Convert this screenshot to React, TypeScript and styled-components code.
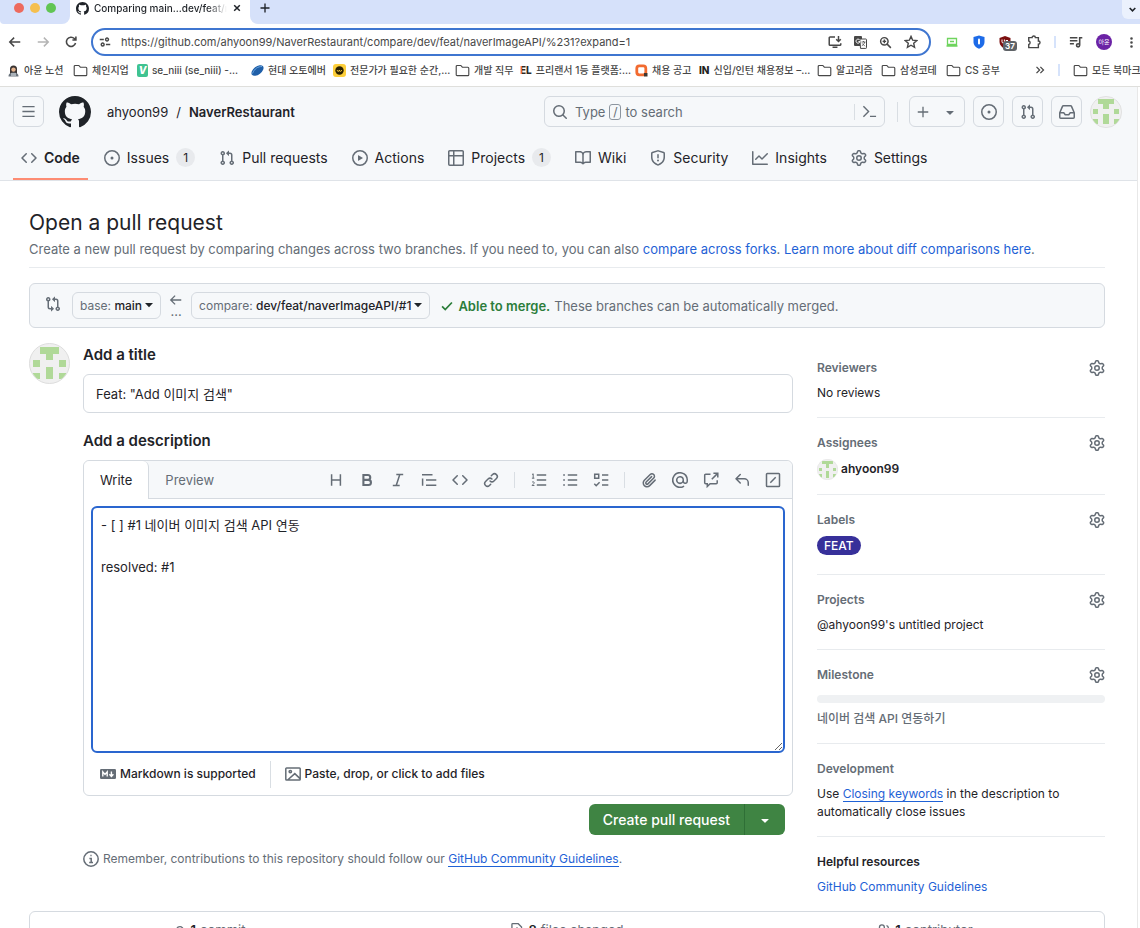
import React from "react";
import styled, { createGlobalStyle, css } from "styled-components";

const font = `Inter, "Noto Sans CJK KR", sans-serif`;
const c = {
  fg: "#1f2328",
  muted: "#656d76",
  border: "#d5dae0",
  soft: "#e8ebee",
  canvas: "#f6f8fa",
  link: "#1f62d6",
  chrome: "#474747",
  strip: "#d6e1fa",
};

const Global = createGlobalStyle`
  * { box-sizing: border-box; }
  body { margin: 0; background: #fff; color: ${c.fg}; font: 13px/18px ${font}; }
  button, input, textarea { font: inherit; color: inherit; margin: 0; }
  button { background: none; border: 0; padding: 0; white-space: nowrap; }
  h1, h2, h3, p { margin: 0; }
  a { color: inherit; text-decoration: none; }
  svg { display: block; flex: none; }
`;

/* ---------- icons ---------- */

const solid = {
  github:
    "M8 0c4.42 0 8 3.58 8 8a8.013 8.013 0 0 1-5.45 7.59c-.4.08-.55-.17-.55-.38 0-.27.01-1.13.01-2.2 0-.75-.25-1.23-.54-1.48 1.78-.2 3.65-.88 3.65-3.95 0-.88-.31-1.59-.82-2.15.08-.2.36-1.02-.08-2.12 0 0-.67-.22-2.2.82-.64-.18-1.32-.27-2-.27-.68 0-1.36.09-2 .27-1.53-1.03-2.2-.82-2.2-.82-.44 1.1-.16 1.92-.08 2.12-.51.56-.82 1.28-.82 2.15 0 3.06 1.86 3.75 3.64 3.95-.23.2-.44.55-.51 1.07-.46.21-1.61.55-2.33-.66-.15-.24-.6-.83-1.23-.82-.67.01-.27.38.01.53.34.19.73.9.82 1.13.16.45.68 1.31 2.69.94 0 .67.01 1.3.01 1.49 0 .21-.15.45-.55.38A7.995 7.995 0 0 1 0 8c0-4.42 3.58-8 8-8Z",
  code: "m11.28 3.22 4.25 4.25a.75.75 0 0 1 0 1.06l-4.25 4.25a.749.749 0 0 1-1.275-.326.749.749 0 0 1 .215-.734L13.94 8l-3.72-3.72a.749.749 0 0 1 .326-1.275.749.749 0 0 1 .734.215Zm-6.56 0a.751.751 0 0 1 1.042.018.751.751 0 0 1 .018 1.042L2.06 8l3.72 3.72a.749.749 0 0 1-.326 1.275.749.749 0 0 1-.734-.215L.47 8.53a.75.75 0 0 1 0-1.06Z",
  issue:
    "M8 9.5a1.5 1.5 0 1 0 0-3 1.5 1.5 0 0 0 0 3ZM8 0a8 8 0 1 1 0 16A8 8 0 0 1 8 0ZM1.5 8a6.5 6.5 0 1 0 13 0 6.5 6.5 0 0 0-13 0Z",
  pull: "M1.5 3.25a2.25 2.25 0 1 1 3 2.122v5.256a2.251 2.251 0 1 1-1.5 0V5.372A2.25 2.25 0 0 1 1.5 3.25Zm5.677-.177L9.573.677A.25.25 0 0 1 10 .854V2.5h1A2.5 2.5 0 0 1 13.5 5v5.628a2.251 2.251 0 1 1-1.5 0V5a1 1 0 0 0-1-1h-1v1.646a.25.25 0 0 1-.427.177L7.177 3.427a.25.25 0 0 1 0-.354ZM3.75 2.5a.75.75 0 1 0 0 1.5.75.75 0 0 0 0-1.5Zm0 9.5a.75.75 0 1 0 0 1.5.75.75 0 0 0 0-1.5Zm8.25.75a.75.75 0 1 0 1.5 0 .75.75 0 0 0-1.5 0Z",
  play: "M8 0a8 8 0 1 1 0 16A8 8 0 0 1 8 0ZM1.5 8a6.5 6.5 0 1 0 13 0 6.5 6.5 0 0 0-13 0Zm4.879-2.773 4.264 2.559a.25.25 0 0 1 0 .428l-4.264 2.559A.25.25 0 0 1 6 10.559V5.442a.25.25 0 0 1 .379-.215Z",
  table:
    "M0 1.75C0 .784.784 0 1.75 0h12.5C15.216 0 16 .784 16 1.75v12.5A1.75 1.75 0 0 1 14.25 16H1.75A1.75 1.75 0 0 1 0 14.25ZM6.5 6.5v8h7.75a.25.25 0 0 0 .25-.25V6.5Zm8-1.5V1.75a.25.25 0 0 0-.25-.25H6.5V5Zm-13 1.5v7.75c0 .138.112.25.25.25H5v-8ZM5 5V1.5H1.75a.25.25 0 0 0-.25.25V5Z",
  book: "M0 1.75A.75.75 0 0 1 .75 1h4.253c1.227 0 2.317.59 3 1.501A3.743 3.743 0 0 1 11.006 1h4.245a.75.75 0 0 1 .75.75v10.5a.75.75 0 0 1-.75.75h-4.507a2.25 2.25 0 0 0-1.591.659l-.622.621a.75.75 0 0 1-1.06 0l-.622-.621A2.25 2.25 0 0 0 5.258 13H.75a.75.75 0 0 1-.75-.75Zm7.251 10.324.004-5.073-.002-2.253A2.25 2.25 0 0 0 5.003 2.5H1.5v9h3.757a3.75 3.75 0 0 1 1.994.574ZM8.755 4.75l-.004 7.322a3.752 3.752 0 0 1 1.992-.572H14.5v-9h-3.495a2.25 2.25 0 0 0-2.25 2.25Z",
  shield:
    "M7.467.133a1.748 1.748 0 0 1 1.066 0l5.25 1.68A1.75 1.75 0 0 1 15 3.48V7c0 1.566-.32 3.182-1.303 4.682-.983 1.498-2.585 2.813-5.032 3.855a1.697 1.697 0 0 1-1.33 0c-2.447-1.042-4.049-2.357-5.032-3.855C1.32 10.182 1 8.566 1 7V3.48a1.75 1.75 0 0 1 1.217-1.667Zm.61 1.429a.25.25 0 0 0-.153 0l-5.25 1.68a.25.25 0 0 0-.174.238V7c0 1.358.275 2.666 1.057 3.86.784 1.194 2.121 2.34 4.366 3.297a.196.196 0 0 0 .154 0c2.245-.956 3.582-2.104 4.366-3.298C13.225 9.666 13.5 8.36 13.5 7V3.48a.251.251 0 0 0-.174-.237l-5.25-1.68ZM8.75 4.75v3a.75.75 0 0 1-1.5 0v-3a.75.75 0 0 1 1.5 0ZM9 10.5a1 1 0 1 1-2 0 1 1 0 0 1 2 0Z",
  graph:
    "M1.5 1.75V13.5h13.75a.75.75 0 0 1 0 1.5H.75a.75.75 0 0 1-.75-.75V1.75a.75.75 0 0 1 1.5 0Zm14.28 2.53-5.25 5.25a.75.75 0 0 1-1.06 0L7 7.06 4.28 9.78a.751.751 0 0 1-1.042-.018.751.751 0 0 1-.018-1.042l3.25-3.25a.75.75 0 0 1 1.06 0L10 7.94l4.72-4.72a.751.751 0 0 1 1.042.018.751.751 0 0 1 .018 1.042Z",
  gear: "M8 0a8.2 8.2 0 0 1 .701.031C9.444.095 9.99.645 10.16 1.29l.288 1.107c.018.066.079.158.212.224.231.114.454.243.668.386.123.082.233.09.299.071l1.103-.303c.644-.176 1.392.021 1.82.63.27.385.506.792.704 1.218.315.675.111 1.422-.364 1.891l-.814.806c-.049.048-.098.147-.088.294.016.257.016.515 0 .772-.01.147.038.246.088.294l.814.806c.475.469.679 1.216.364 1.891a7.977 7.977 0 0 1-.704 1.217c-.428.61-1.176.807-1.82.63l-1.102-.302c-.067-.019-.177-.011-.3.071a5.909 5.909 0 0 1-.668.386c-.133.066-.194.158-.211.224l-.29 1.106c-.168.646-.715 1.196-1.458 1.26a8.006 8.006 0 0 1-1.402 0c-.743-.064-1.289-.614-1.458-1.26l-.289-1.106c-.018-.066-.079-.158-.212-.224a5.738 5.738 0 0 1-.668-.386c-.123-.082-.233-.09-.299-.071l-1.103.303c-.644.176-1.392-.021-1.82-.63a8.12 8.12 0 0 1-.704-1.218c-.315-.675-.111-1.422.363-1.891l.815-.806c.05-.048.098-.147.088-.294a6.214 6.214 0 0 1 0-.772c.01-.147-.038-.246-.088-.294l-.815-.806C.635 6.045.431 5.298.746 4.623a7.92 7.92 0 0 1 .704-1.217c.428-.61 1.176-.807 1.82-.63l1.102.302c.067.019.177.011.3-.071.214-.143.437-.272.668-.386.133-.066.194-.158.211-.224l.29-1.106C6.009.645 6.556.095 7.299.03 7.53.01 7.764 0 8 0Zm-.571 1.525c-.036.003-.108.036-.137.146l-.289 1.105c-.147.561-.549.967-.998 1.189-.173.086-.34.183-.5.29-.417.278-.97.423-1.529.27l-1.103-.303c-.109-.03-.175.016-.195.045-.22.312-.412.644-.573.99-.014.031-.021.11.059.19l.815.806c.411.406.562.957.53 1.456a4.709 4.709 0 0 0 0 .582c.032.499-.119 1.05-.53 1.456l-.815.806c-.081.08-.073.159-.059.19.162.346.353.677.573.989.02.03.085.076.195.046l1.102-.303c.56-.153 1.113-.008 1.53.27.161.107.328.204.501.29.447.222.85.629.997 1.189l.289 1.105c.029.109.101.143.137.146a6.6 6.6 0 0 0 1.142 0c.036-.003.108-.036.137-.146l.289-1.105c.147-.561.549-.967.998-1.189.173-.086.34-.183.5-.29.417-.278.97-.423 1.529-.27l1.103.303c.109.029.175-.016.195-.045.22-.313.411-.644.573-.99.014-.031.021-.11-.059-.19l-.815-.806c-.411-.406-.562-.957-.53-1.456a4.709 4.709 0 0 0 0-.582c-.032-.499.119-1.05.53-1.456l.815-.806c.081-.08.073-.159.059-.19a6.464 6.464 0 0 0-.573-.989c-.02-.03-.085-.076-.195-.046l-1.102.303c-.56.153-1.113.008-1.53-.27a4.44 4.44 0 0 0-.501-.29c-.447-.222-.85-.629-.997-1.189l-.289-1.105c-.029-.11-.101-.143-.137-.146a6.6 6.6 0 0 0-1.142 0ZM11 8a3 3 0 1 1-6 0 3 3 0 0 1 6 0ZM9.5 8a1.5 1.5 0 1 0-3.001.001A1.5 1.5 0 0 0 9.5 8Z",
  search:
    "M10.68 11.74a6 6 0 0 1-7.922-8.982 6 6 0 0 1 8.982 7.922l3.04 3.04a.749.749 0 0 1-.326 1.275.749.749 0 0 1-.734-.215ZM11.5 7a4.499 4.499 0 1 0-8.997 0A4.499 4.499 0 0 0 11.5 7Z",
  inbox:
    "M2.8 2.06A1.75 1.75 0 0 1 4.41 1h7.18c.7 0 1.333.417 1.61 1.06l2.74 6.395c.04.093.06.194.06.295v4.5A1.75 1.75 0 0 1 14.25 15H1.75A1.75 1.75 0 0 1 0 13.25v-4.5c0-.101.02-.202.06-.295Zm1.61.44a.25.25 0 0 0-.23.152L1.887 8H4.75a.75.75 0 0 1 .6.3L6.625 10h2.75l1.275-1.7a.75.75 0 0 1 .6-.3h2.863L11.82 2.652a.25.25 0 0 0-.23-.152Zm10.09 7h-2.875l-1.275 1.7a.75.75 0 0 1-.6.3h-3.5a.75.75 0 0 1-.6-.3L4.375 9.5H1.5v3.75c0 .138.112.25.25.25h12.5a.25.25 0 0 0 .25-.25Z",
  compare:
    "M9.573.677A.25.25 0 0 1 10 .854V2.5h1A2.5 2.5 0 0 1 13.5 5v5.628a2.251 2.251 0 1 1-1.5 0V5a1 1 0 0 0-1-1h-1v1.646a.25.25 0 0 1-.427.177L7.177 3.427a.25.25 0 0 1 0-.354ZM6 12v-1.646a.25.25 0 0 1 .427-.177l2.396 2.396a.25.25 0 0 1 0 .354l-2.396 2.396A.25.25 0 0 1 6 15.146V13.5H5A2.5 2.5 0 0 1 2.5 11V5.372a2.25 2.25 0 1 1 1.5 0V11a1 1 0 0 0 1 1ZM4 3.25a.75.75 0 1 0-1.5 0 .75.75 0 0 0 1.5 0ZM12.75 12a.75.75 0 1 0 0 1.5.75.75 0 0 0 0-1.5Z",
  link: "m7.775 3.275 1.25-1.25a3.5 3.5 0 1 1 4.95 4.95l-2.5 2.5a3.5 3.5 0 0 1-4.95 0 .751.751 0 0 1 .018-1.042.751.751 0 0 1 1.042-.018 1.998 1.998 0 0 0 2.83 0l2.5-2.5a2.002 2.002 0 0 0-2.83-2.83l-1.25 1.25a.751.751 0 0 1-1.042-.018.751.751 0 0 1-.018-1.042Zm-4.69 9.64a1.998 1.998 0 0 0 2.83 0l1.25-1.25a.751.751 0 0 1 1.042.018.751.751 0 0 1 .018 1.042l-1.25 1.25a3.5 3.5 0 1 1-4.95-4.95l2.5-2.5a3.5 3.5 0 0 1 4.95 0 .751.751 0 0 1-.018 1.042.751.751 0 0 1-1.042.018 1.998 1.998 0 0 0-2.83 0l-2.5 2.5a1.998 1.998 0 0 0 0 2.83Z",
  mention:
    "M4.75 2.37a6.501 6.501 0 0 0 6.5 11.26.75.75 0 0 1 .75 1.298A7.999 7.999 0 0 1 .989 4.148 8 8 0 0 1 16 7.75v1.5a2.75 2.75 0 0 1-5.072 1.475 3.999 3.999 0 0 1-6.65-4.19A4 4 0 0 1 12 8v1.25a1.25 1.25 0 0 0 2.5 0V7.867a6.5 6.5 0 0 0-9.75-5.496ZM10.5 8a2.5 2.5 0 1 0-5 0 2.5 2.5 0 0 0 5 0Z",
  clip: "M12.212 3.02a1.753 1.753 0 0 0-2.478.003l-5.83 5.83a3.007 3.007 0 0 0-.88 2.127c0 .795.315 1.551.88 2.116.567.567 1.333.89 2.126.89.79 0 1.548-.321 2.116-.89l5.48-5.48a.75.75 0 0 1 1.061 1.06l-5.48 5.48a4.492 4.492 0 0 1-3.177 1.33c-1.2 0-2.345-.487-3.187-1.33a4.483 4.483 0 0 1-1.32-3.177c0-1.195.475-2.341 1.32-3.186l5.83-5.83a3.25 3.25 0 0 1 5.553 2.297c0 .863-.343 1.691-.953 2.301L7.439 12.39c-.375.377-.884.59-1.416.593a1.998 1.998 0 0 1-1.412-.593 1.992 1.992 0 0 1 0-2.828l5.48-5.48a.751.751 0 0 1 1.042.018.751.751 0 0 1 .018 1.042l-5.48 5.48a.492.492 0 0 0 0 .707.499.499 0 0 0 .352.154.51.51 0 0 0 .356-.154l5.833-5.827a1.755 1.755 0 0 0 0-2.481Z",
  reply:
    "M6.78 1.97a.75.75 0 0 1 0 1.06L3.81 6h6.44A4.75 4.75 0 0 1 15 10.75v2.5a.75.75 0 0 1-1.5 0v-2.5a3.25 3.25 0 0 0-3.25-3.25H3.81l2.97 2.97a.749.749 0 0 1-.326 1.275.749.749 0 0 1-.734-.215L1.47 7.28a.75.75 0 0 1 0-1.06l4.25-4.25a.75.75 0 0 1 1.06 0Z",
  caret:
    "m4.427 7.427 3.396 3.396a.25.25 0 0 0 .354 0l3.396-3.396A.25.25 0 0 0 11.396 7H4.604a.25.25 0 0 0-.177.427Z",
  kebab: "M8 1.4a1.6 1.6 0 1 1 0 3.2 1.6 1.6 0 0 1 0-3.2Zm0 5a1.6 1.6 0 1 1 0 3.2 1.6 1.6 0 0 1 0-3.2Zm0 5a1.6 1.6 0 1 1 0 3.2 1.6 1.6 0 0 1 0-3.2Z",
};

const line = {
  menu: "M1.5 2.8h13M1.5 8h13M1.5 13.2h13",
  plus: "M8 2v12M2 8h12",
  terminal: "m1.5 2.5 5.5 5.5-5.5 5.5M8.5 13.2h6.5",
  left: "M7 3 2 8l5 5M2.4 8H14",
  heading: "M3.6 2.2v11.6M12.4 2.2v11.6M3.6 8h8.8",
  italic: "M6.3 2.4h6.9M2.8 13.6h6.9M9.8 2.6 6.2 13.4",
  quote: "M1 2.8h10.5M5 8h10.3M5 13.2h10.3M1.6 6.6v7.2",
  olist: "M5.8 3h9.4M5.8 8h9.4M5.8 13h9.4",
  ulist: "M5.8 3h9.4M5.8 8h9.4M5.8 13h9.4M1.2 3h1.7M1.2 8h1.7M1.2 13h1.7",
  tasks: "M9 3h6.3M9 8h6.3M9 13h6.3M1.7 2.2h4v4h-4zM1.3 11.8l1.9 1.9 3.4-3.4",
  cross: "M7.5 2.2H2.7a1 1 0 0 0-1 1v7.6a1 1 0 0 0 1 1h1.6v2.7l2.8-2.7h6.1a1 1 0 0 0 1-1V8.3M8.8 7.2l5.6-5.6M10.4 1.2h4.4v4.4",
  slash: "M2.3 1.5h11.4a.8.8 0 0 1 .8.8v11.4a.8.8 0 0 1-.8.8H2.3a.8.8 0 0 1-.8-.8V2.3a.8.8 0 0 1 .8-.8ZM5.3 10.7l5.4-5.4",
  check: "m2.4 8.4 3.6 3.6 7.6-8",
  image: "M1.6 2h12.8a.8.8 0 0 1 .8.8v10.4a.8.8 0 0 1-.8.8H1.6a.8.8 0 0 1-.8-.8V2.8a.8.8 0 0 1 .8-.8ZM2.6 14l7.2-6.4 5.2 5M4.1 5.6a1.2 1.2 0 1 0 2.4 0 1.2 1.2 0 1 0-2.4 0",
  info: "M8 .8a7.2 7.2 0 1 1 0 14.4A7.2 7.2 0 0 1 8 .8ZM6.4 7.4H8.2v4M6.2 11.5h3.8M7.4 4.6h1.2",
  close: "m3.5 3.5 9 9M12.5 3.5l-9 9",
  right: "m9 3 5 5-5 5M13.6 8H2",
  reload: "M13.2 9.2a5.3 5.3 0 1 1-1.4-5.2l1.6 1.6M13.6 1.8v4H9.6",
  tune: "M1 4.6h5.4M9.2 11.4H15M8.8 4.6a1.9 1.9 0 1 0 3.8 0 1.9 1.9 0 1 0-3.8 0M3 11.4a1.9 1.9 0 1 0 3.8 0 1.9 1.9 0 1 0-3.8 0",
  install: "M8 2.2H2.4a1 1 0 0 0-1 1v7.6a1 1 0 0 0 1 1h11.2a1 1 0 0 0 1-1V9.4M5.2 14h5.6M12 1v6M9.4 4.8 12 7.4l2.6-2.6",
  zoom: "M2 6.6a4.6 4.6 0 1 0 9.2 0 4.6 4.6 0 1 0-9.2 0M10 10l4.6 4.6M4.4 6.6h4.4M6.6 4.4v4.4",
  star: "m8 1.6 1.9 4.3 4.7.5-3.5 3.1 1 4.6L8 11.7l-4.1 2.4 1-4.6-3.5-3.1 4.7-.5Z",
  puzzle: "M2 3h3.8a1.9 1.9 0 0 1 3.8 0H13v3.8a1.9 1.9 0 0 1 0 3.8V14.4H2v-3.6a2 2 0 0 0 0-3.9Z",
  queue: "M1 3.2h8.6M1 6.6h8.6M1 10h4.6M12.2 11.6V3.2h3M8.6 11.8a1.8 1.8 0 1 0 3.6 0 1.8 1.8 0 1 0-3.6 0",
  chevron: "m3 5.4 5 5 5-5",
  more: "m2.4 3 5 5-5 5M8.6 3l5 5-5 5",
  commit: "M8 4.2a3.8 3.8 0 1 1 0 7.6 3.8 3.8 0 0 1 0-7.6ZM0 8h4M12 8h4",
  file: "M3 .8h6.4L13.2 4.6v9.8a.8.8 0 0 1-.8.8H3a.8.8 0 0 1-.8-.8V1.6A.8.8 0 0 1 3 .8ZM8 4.8v4.4M5.8 7h4.4M5.8 11.6h4.4",
  people: "M2.8 5a2.8 2.8 0 1 0 5.6 0 2.8 2.8 0 1 0-5.6 0M.8 14a4.8 4.8 0 0 1 9.6 0M10.8 3a2.4 2.4 0 0 1 .6 4.6M12.4 9.6a4 4 0 0 1 2.6 3.6",
  folder: "M1.3 3.6c0-.6.4-1 1-1h3.9l1.6 1.9h5.9c.6 0 1 .4 1 1v7c0 .6-.4 1-1 1H2.3c-.6 0-1-.4-1-1Z",
};

const Solid = ({ n, s = 16 }: { n: keyof typeof solid; s?: number }) => (
  <svg width={s} height={s} viewBox="0 0 16 16" fill="currentColor" fillRule="evenodd" aria-hidden>
    <path d={solid[n]} />
  </svg>
);

const Line = ({ n, s = 16, w = 1.5 }: { n: keyof typeof line; s?: number; w?: number }) => (
  <svg width={s} height={s} viewBox="0 0 16 16" fill="none" stroke="currentColor" strokeWidth={w} aria-hidden>
    <path d={line[n]} />
  </svg>
);

const DropCaret = () => (
  <svg width="8" height="8" viewBox="0 0 8 8" fill={c.fg} aria-hidden>
    <path d="M0 1h8L4 5.2Z" />
  </svg>
);

const BoldIcon = () => (
  <svg width="16" height="16" viewBox="0 0 16 16" fill="none" stroke="currentColor" strokeWidth="2.1" aria-hidden>
    <path d="M4.4 3h4.4a2.4 2.4 0 0 1 0 4.9H4.4ZM4.4 7.9h5a2.5 2.5 0 0 1 0 5.1h-5Z" />
  </svg>
);

const NumberedIcon = () => (
  <svg width="16" height="16" viewBox="0 0 16 16" fill="none" stroke="currentColor" aria-hidden>
    <path d={line.olist} strokeWidth="1.5" />
    <path d="M1 2.6 2.2 1.8v4.4M.9 6.2h2.5M1 10.4c.6-1 2.2-.7 2.2.3 0 .9-1.2 1.5-2.1 2.8h2.3" strokeWidth="1" />
  </svg>
);

const MarkdownIcon = () => (
  <svg width="16" height="16" viewBox="0 0 16 16" fill="none" aria-hidden>
    <rect y="3" width="16" height="10" rx="1.2" fill={c.muted} />
    <path d="M2.8 10.6V5.8L5 8.4l2.2-2.6v4.8M11.4 5.4v4.4M9.4 8.2l2 2.2 2-2.2" stroke="#fff" strokeWidth="1.4" />
  </svg>
);

const blocks = [
  [2, 1, 3, 1], [3, 2, 1, 1], [1, 3, 1, 1], [5, 3, 1, 1], [3, 4, 1, 2], [1, 5, 1, 1], [5, 5, 1, 1],
];
const Identicon = ({ size, id }: { size: number; id: string }) => (
  <svg width={size} height={size} viewBox="0 0 42 42" role="img" aria-label="@ahyoon99">
    <clipPath id={id}><circle cx="21" cy="21" r="20" /></clipPath>
    <circle cx="21" cy="21" r="20.5" fill="#f0f0f0" stroke="#dcdcdc" />
    <g clipPath={`url(#${id})`} fill="#b0d998" shapeRendering="crispEdges">
      {blocks.map(([x, y, w, h]) => (
        <rect key={`${x}${y}`} x={(x - 0.5) * 6.8 + 0.6} y={(y - 0.5) * 6.6 + 1} width={w * 6.8} height={h * 6.6} />
      ))}
    </g>
  </svg>
);

/* ---------- browser chrome ---------- */

const Window = styled.div`
  height: 100vh;
  display: flex;
  flex-direction: column;
  overflow: hidden;
`;
const TabStrip = styled.div`
  height: 24px;
  flex: none;
  display: flex;
`;
const Lights = styled.div`
  display: flex;
  gap: 6px;
  padding: 3px 14px 0;
  background: ${c.strip};
  border-radius: 0 0 8px 4px;
`;
const Light = styled.span<{ $color: string }>`
  width: 10px;
  height: 10px;
  border-radius: 50%;
  background: ${(p) => p.$color};
`;
const BrowserTab = styled.div`
  width: 180px;
  padding: 0 8px 8px 6px;
  display: flex;
  align-items: center;
  gap: 5px;
  font-size: 10px;
  font-weight: 500;
`;
const TabTitle = styled.span`
  flex: 1;
  overflow: hidden;
  white-space: nowrap;
  mask-image: linear-gradient(90deg, #000 85%, transparent);
`;
const StripRest = styled.div`
  flex: 1;
  display: flex;
  align-items: flex-start;
  justify-content: space-between;
  background: ${c.strip};
  border-radius: 0 0 0 8px;
`;
const NewTab = styled.button`
  padding: 2px 0 0 9px;
`;
const TabSearch = styled.button`
  width: 18px;
  height: 19px;
  padding-left: 6px;
  border-radius: 0 0 0 6px;
  background: #ebf1fd;
`;
const Toolbar = styled.div`
  height: 36px;
  flex: none;
  display: flex;
  align-items: center;
  padding: 0 2px 0 8px;
  color: ${c.chrome};
`;
const NavButtons = styled.div`
  display: flex;
  gap: 14px;
  padding-right: 13px;
`;
const ChromeButton = styled.button<{ $dim?: boolean }>`
  color: ${(p) => (p.$dim ? "#b4b4b4" : "inherit")};
`;
const Omnibox = styled.div`
  flex: 1;
  height: 28px;
  display: flex;
  align-items: center;
  gap: 10px;
  padding: 0 11px 0 6px;
  border: 2px solid #3f76d0;
  border-radius: 14px;
`;
const OmniActions = styled.div`
  display: flex;
  align-items: center;
  gap: 12px;
`;
const UrlInput = styled.input`
  flex: 1;
  min-width: 0;
  border: 0;
  padding: 0;
  outline: 0;
  background: none;
  font-size: 11px;
  line-height: 16px;
`;
const Extensions = styled.div`
  display: flex;
  align-items: center;
  gap: 13px;
  padding-left: 14px;
`;
const Blocker = styled.span`
  position: relative;
  margin-right: 3px;
`;
const BlockCount = styled.span`
  position: absolute;
  left: 4px;
  top: 5px;
  padding: 0 2px;
  border-radius: 3px;
  background: #5f6368;
  color: #fff;
  font-size: 8px;
  font-weight: 700;
  line-height: 10px;
`;
const Divider = styled.span<{ $h: number; $color?: string }>`
  width: ${(p) => (p.$color ? 2 : 1)}px;
  height: ${(p) => p.$h}px;
  background: ${(p) => p.$color || "#d9dee3"};
`;
const Profile = styled.button`
  width: 16px;
  height: 16px;
  border-radius: 50%;
  background: #6b22a5;
  color: #fff;
  font-size: 6px;
  line-height: 16px;
`;
const Bookmarks = styled.nav`
  height: 27px;
  flex: none;
  display: flex;
  align-items: center;
  gap: 13px;
  padding: 0 0 6px 7px;
  border-bottom: 1px solid #dfdfdc;
  color: ${c.chrome};
  font-size: 10px;
  font-weight: 500;
`;
const Bookmark = styled.a<{ $w: number }>`
  width: ${(p) => p.$w}px;
  flex: none;
  display: flex;
  align-items: center;
  gap: 4px;
  white-space: nowrap;
`;
const Overflow = styled.button`
  margin-left: auto;
`;
const Favicon = styled.span<{ $bg?: string; $fg?: string }>`
  width: 13px;
  height: 13px;
  border-radius: 2px;
  background: ${(p) => p.$bg || "none"};
  color: ${(p) => p.$fg || "#fff"};
  font-size: 10px;
  font-weight: 800;
  line-height: 13px;
  text-align: center;
`;

const Folder = () => <Line n="folder" s={15} w={1.2} />;
const Person = () => (
  <svg width="13" height="13" viewBox="0 0 13 13">
    <path d="M3 10V5a3.5 3.5 0 0 1 7 0v5Z" fill="#3a3432" />
    <circle cx="6.5" cy="5.6" r="2.2" fill="#e5b48e" />
    <path d="M1.5 12.5c0-3 2-4 5-4s5 1 5 4Z" fill="#6a737c" />
    <path d="M4 9h5v3H4Z" fill="#a9b1b8" />
  </svg>
);
const Swoosh = () => (
  <svg width="13" height="13" viewBox="0 0 13 13">
    <ellipse cx="6.5" cy="6.5" rx="7" ry="4" transform="rotate(-38 6.5 6.5)" fill="#1f5fa8" />
    <path d="M1.500 9.500C3.500 4.500 7 2.500 11 2.500" stroke="#6aa5e0" fill="none" />
  </svg>
);
const Lens = () => (
  <svg width="13" height="13" viewBox="0 0 13 13">
    <rect width="13" height="13" rx="3" fill="#fdcf3a" />
    <circle cx="6.5" cy="6.5" r="4.2" fill="#2b2100" />
    <path d="M4.2 6.2a1.1 1.1 0 1 0 2.2 0 1.1 1.1 0 1 0 2.200 0" stroke="#fdcf3a" fill="none" />
  </svg>
);
const Ring = () => (
  <svg width="13" height="13" viewBox="0 0 13 13">
    <rect x="1.8" y="1.8" width="9" height="9" rx="2.5" fill="none" stroke="#f26b30" strokeWidth="2.8" />
    <path d="M9 9h3.500v3.500H9Z" fill="#40352f" />
  </svg>
);
const EarlyLogo = () => (
  <Favicon $fg="#2a2a2a"><EarlyAccent>E</EarlyAccent>L</Favicon>
);
const EarlyAccent = styled.span`
  background: linear-gradient(90deg, #f26b30 40%, #2a2a2a 40%);
  background-clip: text;
  color: transparent;
`;

const bookmarks: { label: string; w: number; icon: React.ReactNode }[] = [
  { label: "아윤 노션", w: 53, icon: <Person /> },
  { label: "체인지업", w: 51, icon: <Folder /> },
  { label: "se_niii (se_niii) -...", w: 101, icon: <Favicon $bg="#3fc391"><i>V</i></Favicon> },
  { label: "현대 오토에버", w: 69, icon: <Swoosh /> },
  { label: "전문가가 필요한 순간,...", w: 109, icon: <Lens /> },
  { label: "개발 직무", w: 52, icon: <Folder /> },
  { label: "프리랜서 1등 플랫폼:...", w: 102, icon: <EarlyLogo /> },
  { label: "채용 공고", w: 51, icon: <Ring /> },
  { label: "신입/인턴 채용정보 –...", w: 105, icon: <Favicon $fg="#222">IN</Favicon> },
  { label: "알고리즘", w: 51, icon: <Folder /> },
  { label: "삼성코테", w: 52, icon: <Folder /> },
  { label: "CS 공부", w: 51, icon: <Folder /> },
];

/* ---------- GitHub page ---------- */

const Viewport = styled.div`
  flex: 1;
  min-height: 0;
  overflow: hidden;
  margin-right: 2px;
  border-right: 1px solid #e8e8e8;
`;
const Header = styled.header`
  background: ${c.canvas};
  border-bottom: 1px solid #dfe3e8;
`;
const TopRow = styled.div`
  display: flex;
  align-items: center;
  padding: 9px 15px 0 13px;
  height: 40px;
`;
const IconButton = styled.button<{ $w?: number }>`
  width: ${(p) => p.$w || 31}px;
  height: 31px;
  display: flex;
  align-items: center;
  justify-content: center;
  gap: 12px;
  border: 1px solid ${c.border};
  border-radius: 6px;
  color: ${c.muted};
`;
const HomeLink = styled.a`
  margin: 0 16px 0 15px;
`;
const Crumbs = styled.div`
  display: flex;
  gap: 8px;
  font-size: 13px;
  line-height: 20px;
  a:last-child { font-weight: 600; }
`;
const Search = styled.button`
  width: 341px;
  height: 31px;
  margin-left: auto;
  padding: 0 7px;
  display: flex;
  align-items: center;
  gap: 7px;
  border: 1px solid ${c.border};
  border-radius: 6px;
  color: ${c.muted};
  font-size: 13px;
`;
const SearchText = styled.span`
  flex: 1;
  display: flex;
  align-items: center;
  gap: 4px;
`;
const Key = styled.kbd`
  width: 12px;
  height: 16px;
  border: 1px solid #8c959f;
  border-radius: 3px;
  font: 12px/14px ${font};
  text-align: center;
`;
const Actions = styled.div`
  display: flex;
  align-items: center;
  gap: 8px;
  padding-left: 12px;
`;
const CreateGroup = styled.div`
  padding-left: 3px;
`;
const RepoNav = styled.nav`
  display: flex;
  gap: 8px;
  padding: 10px 13px 0;
`;
const NavTab = styled.a<{ $active?: boolean }>`
  height: 43px;
  padding: 0 8px;
  display: flex;
  align-items: center;
  gap: 7px;
  border-bottom: 2px solid ${(p) => (p.$active ? "#fd8c73" : "transparent")};
  font-size: 14px;
  font-weight: ${(p) => (p.$active ? 600 : 400)};
  white-space: nowrap;
  svg { color: ${c.muted}; }
`;
const Count = styled.span`
  min-width: 19px;
  height: 19px;
  border-radius: 10px;
  background: #e8eaed;
  font-size: 12px;
  line-height: 19px;
  text-align: center;
`;

const Main = styled.main`
  padding: 0 32px 0 29px;
`;
const PageHead = styled.div`
  padding: 26px 0 7px;
  border-bottom: 1px solid ${c.soft};
`;
const PageTitle = styled.h1`
  font-size: 21px;
  line-height: 31px;
  font-weight: 400;
`;
const Lead = styled.p`
  color: ${c.muted};
  font-size: 13px;
  line-height: 22px;
`;
const Link = styled.a<{ $underline?: boolean }>`
  color: ${c.link};
  ${(p) => p.$underline && css`border-bottom: 1px solid ${c.link};`}
`;
const RangeBar = styled.div`
  margin-top: 15px;
  height: 45px;
  padding: 0 15px;
  display: flex;
  align-items: center;
  border: 1px solid ${c.border};
  border-radius: 6px;
  background: ${c.canvas};
  color: ${c.muted};
`;
const RefButton = styled.button`
  height: 27px;
  padding: 0 7px;
  display: flex;
  align-items: center;
  gap: 3px;
  border: 1px solid ${c.border};
  border-radius: 6px;
  font-size: 12px;
  b { font-weight: 500; color: ${c.fg}; }
`;
const CompareIcon = styled.span`
  padding: 0 11px 4px 0;
`;
const Arrow = styled.span`
  width: 30px;
  display: flex;
  flex-direction: column;
  align-items: center;
  line-height: 8px;
  padding-bottom: 4px;
`;
const MergeState = styled.p`
  margin-left: 10px;
  display: flex;
  align-items: center;
  gap: 4px;
  b { font-weight: 600; }
`;
const MergeOk = styled.b`
  display: flex;
  align-items: center;
  gap: 4px;
  color: #2b7d3a;
`;

const Columns = styled.div`
  display: grid;
  grid-template-columns: 40px minmax(0, 1fr) 288px;
  column-gap: 14px;
  padding-top: 15px;
`;
const Form = styled.form`
  padding-right: 10px;
`;
const FieldLabel = styled.label`
  display: block;
  font-size: 15px;
  line-height: 24px;
  font-weight: 600;
`;
const TitleInput = styled.input`
  width: 100%;
  height: 39px;
  margin: 7px 0 16px;
  padding: 0 12px;
  border: 1px solid ${c.border};
  border-radius: 6px;
`;
const Editor = styled.div`
  margin-top: 7px;
  border: 1px solid ${c.border};
  border-radius: 6px;
`;
const EditorHead = styled.div`
  height: 38px;
  display: flex;
  background: ${c.canvas};
  border-bottom: 1px solid ${c.border};
  border-radius: 6px 6px 0 0;
`;
const EditorTab = styled.button<{ $active?: boolean }>`
  height: 38px;
  padding: 0 16px;
  color: ${(p) => (p.$active ? c.fg : c.muted)};
  ${(p) => p.$active && css`
    background: #fff;
    border-right: 1px solid ${c.border};
    border-radius: 6px 6px 0 0;
  `}
`;
const Tools = styled.div`
  margin-left: auto;
  padding-right: 4px;
  display: flex;
  align-items: center;
  color: ${c.muted};
`;
const Tool = styled.button`
  width: 31px;
  height: 31px;
  display: flex;
  align-items: center;
  justify-content: center;
`;
const ToolGap = styled.span`
  width: 1px;
  height: 16px;
  margin: 0 8px;
  background: #d9dee3;
`;
const Body = styled.textarea`
  display: block;
  width: calc(100% - 14px);
  height: 247px;
  margin: 7px 7px 0;
  padding: 7px 8px;
  border: 2px solid #2a66cf;
  border-radius: 6px;
  outline: 0;
  line-height: 21px;
  resize: vertical;
`;
const EditorFoot = styled.div`
  height: 42px;
  display: flex;
  align-items: center;
  padding: 0 16px;
  gap: 14px;
  font-size: 12px;
  font-weight: 500;
  svg { color: ${c.muted}; }
`;
const FootButton = styled.button`
  display: flex;
  align-items: center;
  gap: 4px;
`;
const Submit = styled.div`
  display: flex;
  justify-content: flex-end;
  padding: 8px 8px 0 0;
`;
const Primary = styled.button<{ $part: "main" | "menu" }>`
  height: 31px;
  padding: 0 ${(p) => (p.$part === "main" ? 14 : 12)}px;
  background: #3f8443;
  color: #fff;
  font-size: 14px;
  font-weight: 500;
  border-radius: ${(p) => (p.$part === "main" ? "6px 0 0 6px" : "0 6px 6px 0")};
  border-left: ${(p) => (p.$part === "main" ? "0" : "1px solid #2f6f36")};
`;
const Note = styled.p`
  display: flex;
  align-items: center;
  gap: 4px;
  padding-top: 15px;
  color: ${c.muted};
  font-size: 12px;
`;

const Section = styled.section`
  padding: 16px 0 15px;
  font-size: 12px;
  border-bottom: 1px solid ${c.soft};
  &:last-child { border-bottom: 0; }
`;
const SectionHead = styled.div<{ $strong?: boolean }>`
  display: flex;
  justify-content: space-between;
  margin-bottom: 7px;
  color: ${(p) => (p.$strong ? c.fg : c.muted)};
  h3 { font-size: 12px; line-height: 18px; font-weight: 600; }
`;
const Assignee = styled.a`
  height: 20px;
  display: flex;
  align-items: center;
  gap: 3px;
  font-weight: 600;
`;
const LabelRow = styled.div`
  height: 23px;
`;
const Pill = styled.a`
  display: inline-block;
  padding: 0 7px;
  border-radius: 10px;
  background: #37309a;
  color: #fff;
  line-height: 19px;
  font-weight: 500;
`;
const Progress = styled.div`
  height: 8px;
  margin: 11px 0 7px;
  border-radius: 4px;
  background: #eff1f3;
`;
const MutedLink = styled.a`
  display: block;
  color: ${c.muted};
  font-weight: 500;
`;
const Summary = styled.div`
  display: grid;
  grid-template-columns: repeat(3, 1fr);
  height: 37px;
  border: 1px solid ${c.border};
  border-radius: 6px;
  color: ${c.muted};
`;
const SummaryItem = styled.a`
  display: flex;
  align-items: center;
  justify-content: center;
  gap: 4px;
  b { color: ${c.fg}; font-weight: 600; }
`;

const Side = ({ title, gear = true, strong, children }: { title: string; gear?: boolean; strong?: boolean; children: React.ReactNode }) => (
  <Section>
    <SectionHead $strong={strong}>
      <h3>{title}</h3>
      {gear && <button aria-label={`Edit ${title}`}><Solid n="gear" /></button>}
    </SectionHead>
    {children}
  </Section>
);

const navTabs: { icon: keyof typeof solid; label: string; count?: number; active?: boolean }[] = [
  { icon: "code", label: "Code", active: true },
  { icon: "issue", label: "Issues", count: 1 },
  { icon: "pull", label: "Pull requests" },
  { icon: "play", label: "Actions" },
  { icon: "table", label: "Projects", count: 1 },
  { icon: "book", label: "Wiki" },
  { icon: "shield", label: "Security" },
  { icon: "graph", label: "Insights" },
  { icon: "gear", label: "Settings" },
];

const tools: ([string, React.ReactNode] | null)[] = [
  ["Heading", <Line n="heading" />],
  ["Bold", <BoldIcon />],
  ["Italic", <Line n="italic" />],
  ["Quote", <Line n="quote" />],
  ["Code", <Solid n="code" />],
  ["Link", <Solid n="link" />],
  null,
  ["Numbered list", <NumberedIcon />],
  ["Unordered list", <Line n="ulist" />],
  ["Task list", <Line n="tasks" />],
  null,
  ["Attach files", <Solid n="clip" />],
  ["Mention", <Solid n="mention" />],
  ["Reference", <Line n="cross" />],
  ["Saved replies", <Solid n="reply" />],
  ["Slash commands", <Line n="slash" />],
];

export default function App() {
  return (
    <Window>
      <Global />
      <TabStrip>
        <Lights>
          <Light $color="#ed6a5e" />
          <Light $color="#f5bf4f" />
          <Light $color="#61c554" />
        </Lights>
        <BrowserTab>
          <Solid n="github" s={13} />
          <TabTitle>Comparing main...dev/feat/na</TabTitle>
          <button aria-label="Close tab"><Line n="close" s={10} w={2.4} /></button>
        </BrowserTab>
        <StripRest>
          <NewTab aria-label="New tab"><Line n="plus" s={12} w={1.8} /></NewTab>
          <TabSearch aria-label="Search tabs"><Line n="chevron" s={9} w={2.8} /></TabSearch>
        </StripRest>
      </TabStrip>

      <Toolbar>
        <NavButtons>
          <ChromeButton aria-label="Back"><Line n="left" s={14} w={1.7} /></ChromeButton>
          <ChromeButton aria-label="Forward" $dim><Line n="right" s={14} w={1.7} /></ChromeButton>
          <ChromeButton aria-label="Reload"><Line n="reload" s={14} w={1.8} /></ChromeButton>
        </NavButtons>
        <Omnibox>
          <Line n="tune" s={12} w={2} />
          <UrlInput aria-label="Address" defaultValue="https://github.com/ahyoon99/NaverRestaurant/compare/dev/feat/naverImageAPI/%231?expand=1" />
          <OmniActions>
            <ChromeButton aria-label="Install"><Line n="install" s={14} w={1.7} /></ChromeButton>
            <ChromeButton aria-label="Translate">
              <svg width="13" height="13" viewBox="0 0 13 13">
                <rect width="8" height="10" rx="1" fill="#474747" />
                <path d="M5.8 3h6a.7.7 0 0 1 .7.7v8a.7.7 0 0 1-.7.7H6.5Z" fill="#fff" stroke="#474747" />
                <path d="M5.8 4.2A2 2 0 1 0 6 5.6H4.4" stroke="#fff" fill="none" />
                <path d="M7.5 6h4M9.5 5v1M10.8 6c-.5 2-1.8 3-3 3.8M8.3 7.5l2.6 2.7" stroke="#474747" strokeWidth=".8" fill="none" />
              </svg>
            </ChromeButton>
            <ChromeButton aria-label="Zoom"><Line n="zoom" s={13} w={1.8} /></ChromeButton>
            <ChromeButton aria-label="Bookmark"><Line n="star" s={14} w={1.6} /></ChromeButton>
          </OmniActions>
        </Omnibox>
        <Extensions>
          <svg width="14" height="14" viewBox="0 0 14 14" aria-hidden>
            <path d="M2.5 3.5h9v6h-9ZM1.5 11h11M5 6.5h4" stroke="#6fd45e" strokeWidth="1.3" fill="none" />
          </svg>
          <svg width="14" height="14" viewBox="0 0 14 14" aria-hidden>
            <path d="M7 .5 12.5 2v5c0 3.5-2.5 5.5-5.5 6.8C4 12.5 1.5 10.5 1.5 7V2Z" fill="#1d6be8" />
            <rect x="6" y="3.5" width="2" height="6" rx="1" fill="#fff" />
          </svg>
          <Blocker>
            <svg width="12" height="13" viewBox="0 0 12 13" aria-hidden>
              <path d="M6 0 11.5 2v4c0 3-2.5 5.5-5.5 7C3 11.5.5 9 .5 6V2Z" fill="#7c1010" />
              <path d="M3 3.5v2.3a1.2 1.2 0 0 0 2.4 0V3.5M7 6V4.5h2" stroke="#fff" fill="none" />
            </svg>
            <BlockCount>37</BlockCount>
          </Blocker>
          <ChromeButton aria-label="Extensions"><Line n="puzzle" s={14} w={1.6} /></ChromeButton>
          <Divider $h={12} $color="#d6e3fb" />
          <ChromeButton aria-label="Media"><Line n="queue" s={14} w={1.8} /></ChromeButton>
          <Profile aria-label="Profile">아윤</Profile>
          <ChromeButton aria-label="Menu"><Solid n="kebab" s={13} /></ChromeButton>
        </Extensions>
      </Toolbar>

      <Bookmarks>
        {bookmarks.map((b) => (
          <Bookmark key={b.label} href="#" $w={b.w}>{b.icon}{b.label}</Bookmark>
        ))}
        <Overflow aria-label="More bookmarks"><Line n="more" s={10} w={2} /></Overflow>
        <Divider $h={12} $color="#d6e3fb" />
        <Bookmark href="#" $w={67}><Folder />모든 북마크</Bookmark>
      </Bookmarks>

      <Viewport>
        <Header>
          <TopRow>
            <IconButton aria-label="Open menu"><Line n="menu" s={15} /></IconButton>
            <HomeLink href="#" aria-label="GitHub"><Solid n="github" s={32} /></HomeLink>
            <Crumbs><a href="#">ahyoon99</a><span>/</span><a href="#">NaverRestaurant</a></Crumbs>
            <Search>
              <Solid n="search" />
              <SearchText>Type <Key>/</Key> to search</SearchText>
              <Divider $h={16} />
              <Line n="terminal" s={15} />
            </Search>
            <Actions>
              <Divider $h={20} />
              <CreateGroup><IconButton $w={56} aria-label="Create new"><Line n="plus" s={14} /><Solid n="caret" /></IconButton></CreateGroup>
              <IconButton aria-label="Issues"><Solid n="issue" /></IconButton>
              <IconButton aria-label="Pull requests"><Solid n="pull" /></IconButton>
              <IconButton aria-label="Notifications"><Solid n="inbox" /></IconButton>
              <button aria-label="User menu"><Identicon size={32} id="av-nav" /></button>
            </Actions>
          </TopRow>
          <RepoNav>
            {navTabs.map((t) => (
              <NavTab key={t.label} href="#" $active={t.active}>
                <Solid n={t.icon} />{t.label}{t.count && <Count>{t.count}</Count>}
              </NavTab>
            ))}
          </RepoNav>
        </Header>

        <Main>
          <PageHead>
            <PageTitle>Open a pull request</PageTitle>
            <Lead>
              Create a new pull request by comparing changes across two branches. If you need to, you can also{" "}
              <Link href="#">compare across forks</Link>. <Link href="#">Learn more about diff comparisons here</Link>.
            </Lead>
          </PageHead>

          <RangeBar>
            <CompareIcon><Solid n="compare" /></CompareIcon>
            <RefButton><span>base: <b>main</b></span><DropCaret /></RefButton>
            <Arrow><Line n="left" s={14} /><span>...</span></Arrow>
            <RefButton><span>compare: <b>dev/feat/naverImageAPI/#1</b></span><DropCaret /></RefButton>
            <MergeState>
              <MergeOk><Line n="check" s={14} w={2} />Able to merge.</MergeOk> These branches can be automatically merged.
            </MergeState>
          </RangeBar>

          <Columns>
            <Identicon size={41} id="av-main" />
            <Form onSubmit={(e) => e.preventDefault()}>
              <FieldLabel htmlFor="title">Add a title</FieldLabel>
              <TitleInput id="title" defaultValue={'Feat: "Add 이미지 검색"'} />
              <FieldLabel htmlFor="body">Add a description</FieldLabel>
              <Editor>
                <EditorHead>
                  <EditorTab type="button" $active>Write</EditorTab>
                  <EditorTab type="button">Preview</EditorTab>
                  <Tools>
                    {tools.map((t, i) =>
                      t ? <Tool key={t[0]} type="button" aria-label={t[0]}>{t[1]}</Tool> : <ToolGap key={i} />
                    )}
                  </Tools>
                </EditorHead>
                <Body id="body" defaultValue={"- [ ] #1 네이버 이미지 검색 API 연동\n\nresolved: #1"} />
                <EditorFoot>
                  <FootButton type="button"><MarkdownIcon />Markdown is supported</FootButton>
                  <Divider $h={27} />
                  <FootButton type="button"><Line n="image" />Paste, drop, or click to add files</FootButton>
                </EditorFoot>
              </Editor>
              <Submit>
                <Primary $part="main">Create pull request</Primary>
                <Primary $part="menu" type="button" aria-label="Select type"><Solid n="caret" /></Primary>
              </Submit>
              <Note>
                <Line n="info" />
                <span>Remember, contributions to this repository should follow our <Link href="#" $underline>GitHub Community Guidelines</Link>.</span>
              </Note>
            </Form>

            <aside>
              <Side title="Reviewers"><p>No reviews</p></Side>
              <Side title="Assignees">
                <Assignee href="#"><Identicon size={21} id="av-side" />ahyoon99</Assignee>
              </Side>
              <Side title="Labels"><LabelRow><Pill href="#">FEAT</Pill></LabelRow></Side>
              <Side title="Projects"><p>@ahyoon99's untitled project</p></Side>
              <Side title="Milestone">
                <Progress role="progressbar" aria-label="Milestone progress" aria-valuenow={0} />
                <MutedLink href="#">네이버 검색 API 연동하기</MutedLink>
              </Side>
              <Side title="Development" gear={false}>
                <p>Use <Link href="#" $underline>Closing keywords</Link> in the description to automatically close issues</p>
              </Side>
              <Side title="Helpful resources" gear={false} strong>
                <Link href="#">GitHub Community Guidelines</Link>
              </Side>
            </aside>
          </Columns>

          <Summary>
            <SummaryItem href="#"><Line n="commit" s={14} /><b>1</b> commit</SummaryItem>
            <SummaryItem href="#"><Line n="file" s={14} /><b>8</b> files changed</SummaryItem>
            <SummaryItem href="#"><Line n="people" s={14} /><b>1</b> contributor</SummaryItem>
          </Summary>
        </Main>
      </Viewport>
    </Window>
  );
}
